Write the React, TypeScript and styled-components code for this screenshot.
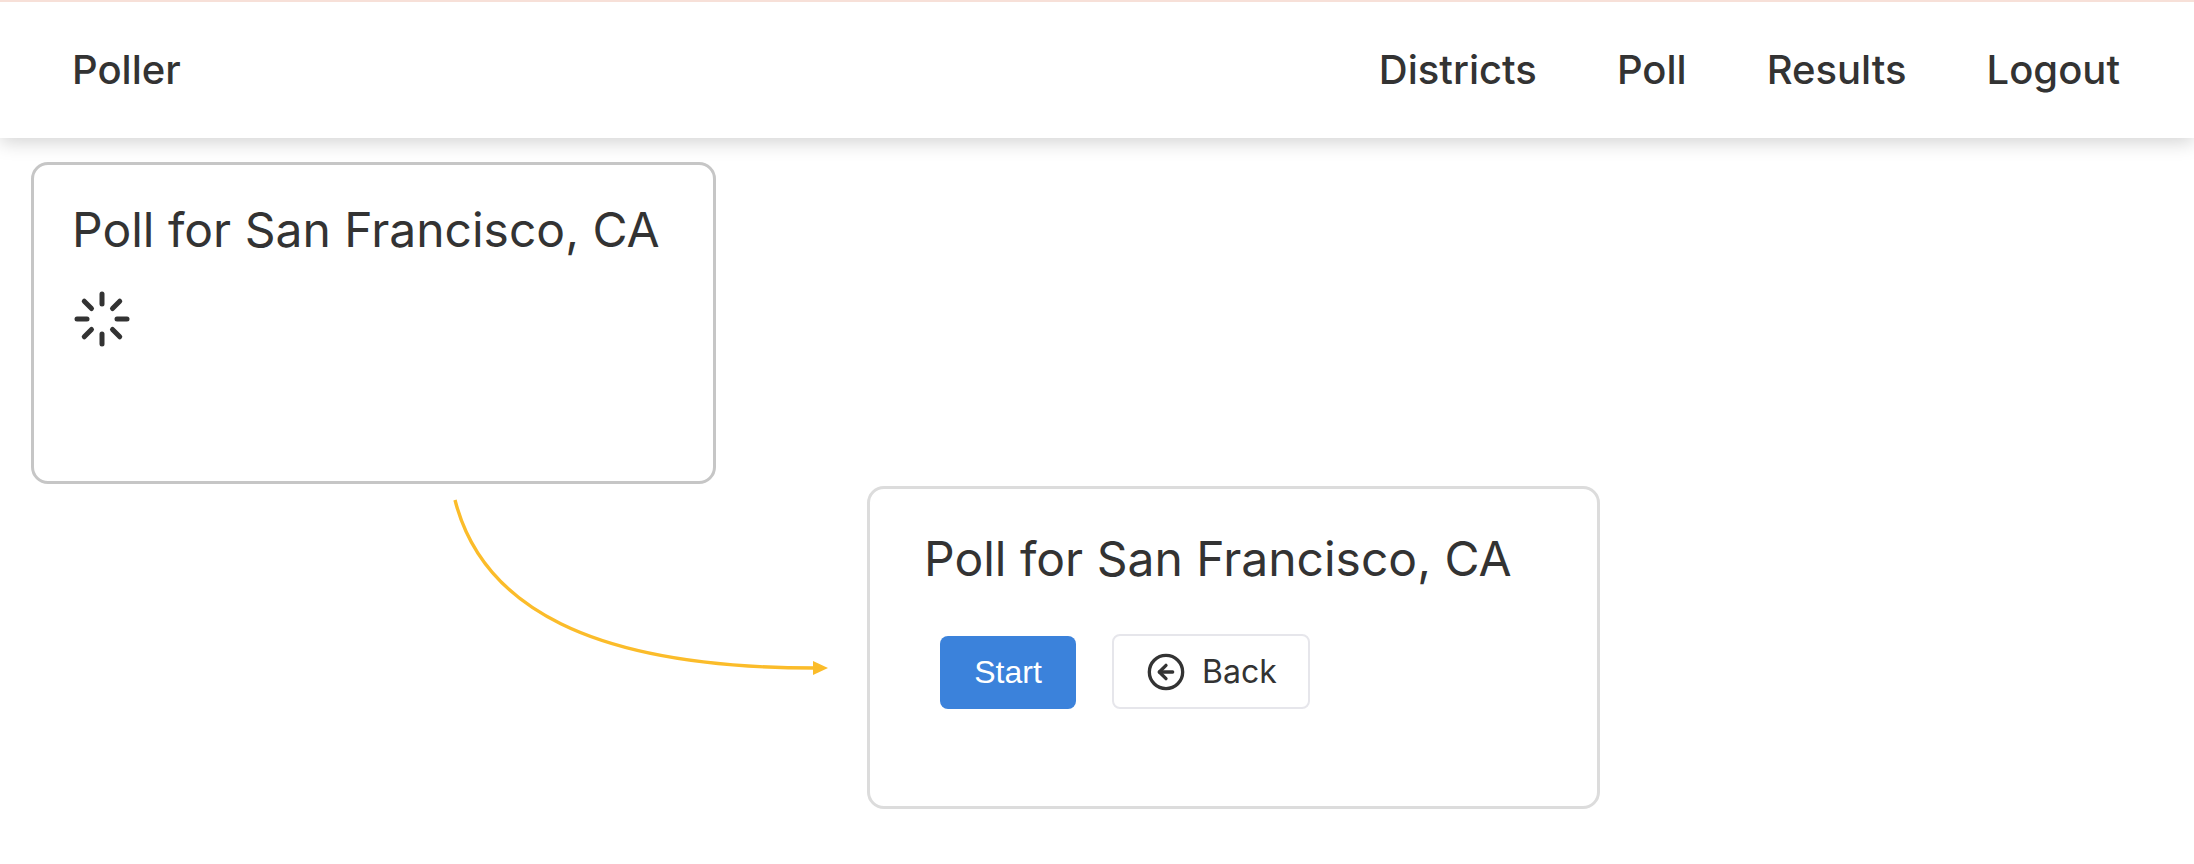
import * as React from 'react'
import styled, { createGlobalStyle } from 'styled-components'
import { CircleArrowLeft, Loader } from 'lucide-react'

const GlobalStyle = createGlobalStyle`
  html, body {
    margin: 0;
    padding: 0;
    background: #fff;
  }
  body {
    font-family: Inter, "Liberation Sans", sans-serif;
    color: #333;
  }
  * {
    box-sizing: border-box;
  }
`

const StyledPage = styled.div`
  position: relative;
  width: 2194px;
  height: 864px;
  overflow: hidden;
  background: #fff;
`

const StyledNavBar = styled.nav`
  height: 138px;
  padding: 0 74px 0 72px;
  border-top: 2px solid #f7e0d8;
  display: flex;
  align-items: center;
  justify-content: space-between;
  background: #fff;
  box-shadow: 0 4px 18px rgba(0, 0, 0, 0.18);
`

const StyledNavText = styled.span`
  font-size: 40px;
  font-weight: 500;
  line-height: 1;
  color: #333;
`

const StyledNavLinks = styled.div`
  display: flex;
  align-items: center;
  gap: 80px;
`

const StyledMain = styled.main`
  display: flex;
  flex-direction: column;
  align-items: flex-start;
  padding-top: 24px;
  gap: 2px;
`

const StyledCard = styled.section<{ $offset: number; $border: string; $paddingLeft: number; $paddingTop: number; $width: number; $height: number }>`
  width: ${({ $width }) => $width}px;
  height: ${({ $height }) => $height}px;
  margin-left: ${({ $offset }) => $offset}px;
  padding: ${({ $paddingTop }) => $paddingTop}px 0 0 ${({ $paddingLeft }) => $paddingLeft}px;
  border: 3px solid ${({ $border }) => $border};
  border-radius: 17px;
  background: #fff;
`

const StyledTitle = styled.h2`
  margin: 0;
  font-size: 48px;
  font-weight: 400;
  line-height: 58px;
  color: #333;
`

const StyledSpinner = styled.div`
  margin: 30px 0 0 0;
  display: flex;
  color: #333;
`

const StyledActions = styled.div`
  display: flex;
  align-items: flex-end;
  gap: 36px;
  margin: 46px 0 0 16px;
`

const StyledPrimaryButton = styled.button`
  width: 136px;
  height: 73px;
  border: none;
  border-radius: 8px;
  background: #3b82db;
  color: #fff;
  font-family: "Liberation Sans", Arial, sans-serif;
  font-size: 32px;
  padding: 0;
`

const StyledBackButton = styled.button`
  width: 198px;
  height: 75px;
  padding: 0 0 0 32px;
  border: 2px solid #e6e6eb;
  border-radius: 8px;
  background: #fff;
  color: #333;
  display: flex;
  align-items: center;
  gap: 16px;
  font-family: Inter, sans-serif;
  font-size: 32px;
`

const StyledArrow = styled.svg`
  position: absolute;
  left: 0;
  top: 0;
  pointer-events: none;
`

const App = () => {
  return (
    <StyledPage>
      <GlobalStyle />
      <StyledNavBar>
        <StyledNavText>Poller</StyledNavText>
        <StyledNavLinks>
          <StyledNavText>Districts</StyledNavText>
          <StyledNavText>Poll</StyledNavText>
          <StyledNavText>Results</StyledNavText>
          <StyledNavText>Logout</StyledNavText>
        </StyledNavLinks>
      </StyledNavBar>

      <StyledMain>
        <StyledCard $offset={31} $border="#c6c6c6" $paddingLeft={38} $paddingTop={36} $width={685} $height={322}>
          <StyledTitle>Poll for San Francisco, CA</StyledTitle>
          <StyledSpinner>
            <Loader size={60} strokeWidth={2} />
          </StyledSpinner>
        </StyledCard>

        <StyledCard $offset={867} $border="#dcdcdc" $paddingLeft={54} $paddingTop={41} $width={733} $height={323}>
          <StyledTitle>Poll for San Francisco, CA</StyledTitle>
          <StyledActions>
            <StyledPrimaryButton>Start</StyledPrimaryButton>
            <StyledBackButton>
              <CircleArrowLeft size={40} strokeWidth={2} />
              Back
            </StyledBackButton>
          </StyledActions>
        </StyledCard>
      </StyledMain>

      {/* connector between the two cards */}
      <StyledArrow width="2194" height="864" viewBox="0 0 2194 864">
        <path d="M455 500 C 482 606 590 668 815 668" fill="none" stroke="#fbbc2a" strokeWidth="3.4" />
        <path d="M813 661 L828 668 L813 675 Z" fill="#fbbc2a" />
      </StyledArrow>
    </StyledPage>
  )
}

export default App
